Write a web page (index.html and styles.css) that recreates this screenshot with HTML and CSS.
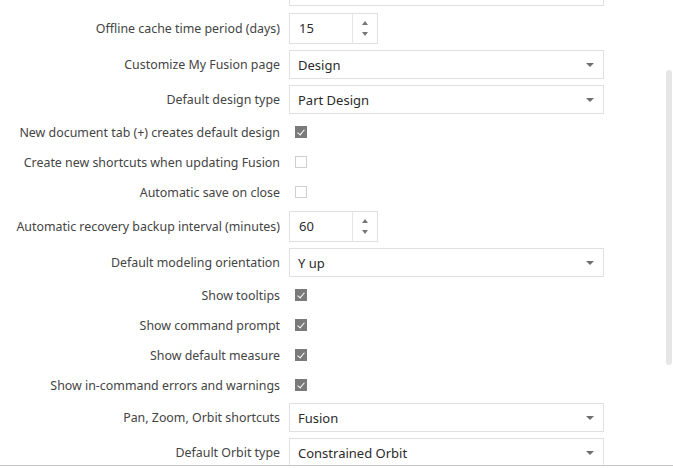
FILE: index.html
```html
<!DOCTYPE html>
<html lang="en">
<head>
  <meta charset="UTF-8">
  <title>Preferences - General</title>
  <link rel="stylesheet" href="styles.css">
</head>
<body>
  <div class="panel">
    <div class="settings">
      <div class="row select-row">
        <span class="label"></span>
        <div class="select"><span></span><i class="caret"></i></div>
      </div>
      <div class="row spin-row">
        <span class="label">Offline cache time period (days)</span>
        <div class="spinner"><span class="value">15</span><span class="arrows"><i class="up"></i><i class="down"></i></span></div>
      </div>
      <div class="row select-row">
        <span class="label">Customize My Fusion page</span>
        <div class="select"><span>Design</span><i class="caret"></i></div>
      </div>
      <div class="row select-row">
        <span class="label">Default design type</span>
        <div class="select"><span>Part Design</span><i class="caret"></i></div>
      </div>
      <div class="row check-row">
        <span class="label">New document tab (+) creates default design</span>
        <span class="check on"></span>
      </div>
      <div class="row check-row">
        <span class="label">Create new shortcuts when updating Fusion</span>
        <span class="check"></span>
      </div>
      <div class="row check-row">
        <span class="label">Automatic save on close</span>
        <span class="check"></span>
      </div>
      <div class="row spin-row">
        <span class="label">Automatic recovery backup interval (minutes)</span>
        <div class="spinner"><span class="value">60</span><span class="arrows"><i class="up"></i><i class="down"></i></span></div>
      </div>
      <div class="row select-row">
        <span class="label">Default modeling orientation</span>
        <div class="select"><span>Y up</span><i class="caret"></i></div>
      </div>
      <div class="row check-row">
        <span class="label">Show tooltips</span>
        <span class="check on"></span>
      </div>
      <div class="row check-row">
        <span class="label">Show command prompt</span>
        <span class="check on"></span>
      </div>
      <div class="row check-row">
        <span class="label">Show default measure</span>
        <span class="check on"></span>
      </div>
      <div class="row check-row">
        <span class="label">Show in-command errors and warnings</span>
        <span class="check on"></span>
      </div>
      <div class="row select-row">
        <span class="label">Pan, Zoom, Orbit shortcuts</span>
        <div class="select"><span>Fusion</span><i class="caret"></i></div>
      </div>
      <div class="row select-row">
        <span class="label">Default Orbit type</span>
        <div class="select"><span>Constrained Orbit</span><i class="caret"></i></div>
      </div>
    </div>
    <div class="scroll-thumb"></div>
  </div>
</body>
</html>
```

FILE: styles.css
```css
html, body {
  margin: 0;
  padding: 0;
  height: 100%;
  overflow: hidden;
  background: #fff;
  font-family: "Noto Sans", "Open Sans", sans-serif;
  font-size: 12.4px;
  color: #444;
}
.panel {
  position: relative;
  height: 465px;
  overflow: hidden;
  border-bottom: 1px solid #c6c6c6;
}
.settings {
  display: flex;
  flex-direction: column;
  margin-top: -26px;
}
.row {
  display: flex;
  align-items: center;
  gap: 9px;
}
.label {
  width: 280px;
  text-align: right;
  white-space: nowrap;
  flex-shrink: 0;
}
.select-row { height: 35px; }
.spin-row { height: 38px; }
.check-row { height: 30px; }

.select {
  box-sizing: border-box;
  width: 315px;
  height: 29px;
  border: 1px solid #e0e0e0;
  display: flex;
  align-items: center;
  justify-content: space-between;
  padding: 0 9px 0 8px;
  color: #2b2b2b;
  font-size: 13px;
}
.caret {
  width: 0;
  height: 0;
  border-left: 4px solid transparent;
  border-right: 4px solid transparent;
  border-top: 4px solid #6e6e6e;
}

.spinner {
  box-sizing: border-box;
  width: 89px;
  height: 31px;
  border: 1px solid #e0e0e0;
  display: flex;
  color: #2b2b2b;
  font-size: 13px;
}
.spinner .value {
  flex: 1;
  display: flex;
  align-items: center;
  padding-left: 9px;
  border-right: 1px solid #e6e6e6;
}
.arrows {
  width: 24px;
  display: flex;
  flex-direction: column;
  align-items: center;
  justify-content: center;
  gap: 7px;
}
.arrows i {
  width: 0;
  height: 0;
  border-left: 3.5px solid transparent;
  border-right: 3.5px solid transparent;
}
.arrows .up { border-bottom: 4px solid #777; }
.arrows .down { border-top: 4px solid #777; }

.check {
  box-sizing: border-box;
  width: 12px;
  height: 12px;
  margin-left: 6px;
  border: 1px solid #cfcfcf;
  background: #fff;
  position: relative;
}
.check.on {
  background: #7a7a7a;
  border-color: #7a7a7a;
}
.check.on::after {
  content: "";
  position: absolute;
  left: 3px;
  top: 1px;
  width: 3px;
  height: 6px;
  border-right: 1.5px solid #fff;
  border-bottom: 1.5px solid #fff;
  transform: rotate(40deg);
}

.scroll-thumb {
  position: absolute;
  right: 1px;
  top: 70px;
  width: 6px;
  height: 295px;
  border-radius: 3px;
  background: #e6e6e6;
}
```
